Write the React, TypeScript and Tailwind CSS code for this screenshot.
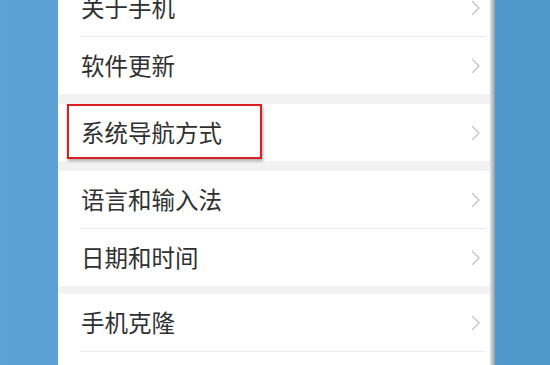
import React from "react";

type Row = { label: string; highlight?: boolean };

const groups: Row[][] = [
  [{ label: "关于手机" }, { label: "软件更新" }],
  [{ label: "系统导航方式", highlight: true }],
  [{ label: "语言和输入法" }, { label: "日期和时间" }],
  [{ label: "手机克隆" }, { label: "备份和恢复" }],
];

function Chevron() {
  return (
    <svg width="10" height="16" viewBox="0 0 10 16" fill="none">
      <path d="M1.5 1.5 L8 8 L1.5 14.5" stroke="#c4c4c4" strokeWidth="1.4" strokeLinecap="round" strokeLinejoin="round" />
    </svg>
  );
}

function SettingRow({ row }: { row: Row }) {
  return (
    <div className="relative flex h-[57px] items-center justify-between pl-[23px] pr-[9px]">
      <span className="text-[23.5px] leading-none text-[#303030]">{row.label}</span>
      <Chevron />
      {row.highlight && (
        <div className="pointer-events-none absolute left-[9px] top-0 h-[55px] w-[195px] border-2 border-[#dc1d22] shadow-[1px_2px_3px_rgba(0,0,0,0.35)]" />
      )}
    </div>
  );
}

export default function App() {
  return (
    <div
      className="flex h-[365px] w-[550px] overflow-hidden bg-gradient-to-r from-[#5ca2d6] to-[#4f97cb]"
      style={{ fontFamily: '"Noto Sans CJK SC", "Noto Sans", sans-serif' }}
    >
      <div className="w-[58px] shrink-0" />
      <div className="w-[432px] shrink-0 overflow-hidden bg-white">
        <div className="-mt-[21px] flex flex-col">
          {groups.map((group, gi) => (
            <div key={gi} className="flex flex-col">
              {gi > 0 && (
                <div className={gi === 3 ? "h-[8px] bg-[#f2f2f2]" : "h-[10px] bg-[#f2f2f2]"} />
              )}
              {group.map((row, ri) => (
                <div key={ri}>
                  <SettingRow row={row} />
                  {ri < group.length - 1 && (
                    <div className="ml-[22px] mr-[5px] h-px bg-[#ebebeb]" />
                  )}
                </div>
              ))}
            </div>
          ))}
        </div>
      </div>
      <div className="w-[5px] shrink-0 bg-gradient-to-r from-[#e4e4e4] to-[#9c9c9c]" />
      <div className="flex-1" />
    </div>
  );
}
